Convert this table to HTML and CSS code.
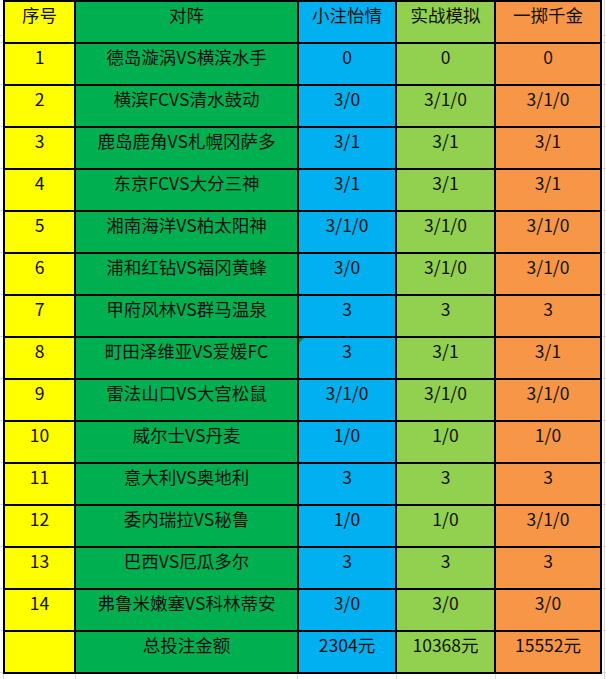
FILE: index.html
```html
<!DOCTYPE html>
<html lang="zh-CN">
<head>
<meta charset="utf-8">
<title>投注表</title>
<link rel="stylesheet" href="styles.css">
</head>
<body>
<div class="sheet">
  <div class="cell c1">序号</div><div class="cell c2">对阵</div><div class="cell c3">小注怡情</div><div class="cell c4">实战模拟</div><div class="cell c5">一掷千金</div>
  <div class="cell c1 num">1</div><div class="cell c2">德岛漩涡VS横滨水手</div><div class="cell c3 num">0</div><div class="cell c4 num">0</div><div class="cell c5 num">0</div>
  <div class="cell c1 num">2</div><div class="cell c2">横滨FCVS清水鼓动</div><div class="cell c3 num">3/0</div><div class="cell c4 num">3/1/0</div><div class="cell c5 num">3/1/0</div>
  <div class="cell c1 num">3</div><div class="cell c2">鹿岛鹿角VS札幌冈萨多</div><div class="cell c3 num">3/1</div><div class="cell c4 num">3/1</div><div class="cell c5 num">3/1</div>
  <div class="cell c1 num">4</div><div class="cell c2">东京FCVS大分三神</div><div class="cell c3 num">3/1</div><div class="cell c4 num">3/1</div><div class="cell c5 num">3/1</div>
  <div class="cell c1 num">5</div><div class="cell c2">湘南海洋VS柏太阳神</div><div class="cell c3 num">3/1/0</div><div class="cell c4 num">3/1/0</div><div class="cell c5 num">3/1/0</div>
  <div class="cell c1 num">6</div><div class="cell c2">浦和红钻VS福冈黄蜂</div><div class="cell c3 num">3/0</div><div class="cell c4 num">3/1/0</div><div class="cell c5 num">3/1/0</div>
  <div class="cell c1 num">7</div><div class="cell c2">甲府风林VS群马温泉</div><div class="cell c3 num">3</div><div class="cell c4 num">3</div><div class="cell c5 num">3</div>
  <div class="cell c1 num">8</div><div class="cell c2">町田泽维亚VS爱媛FC</div><div class="cell c3 num flag">3</div><div class="cell c4 num">3/1</div><div class="cell c5 num">3/1</div>
  <div class="cell c1 num">9</div><div class="cell c2">雷法山口VS大宫松鼠</div><div class="cell c3 num">3/1/0</div><div class="cell c4 num">3/1/0</div><div class="cell c5 num">3/1/0</div>
  <div class="cell c1 num">10</div><div class="cell c2">威尔士VS丹麦</div><div class="cell c3 num">1/0</div><div class="cell c4 num">1/0</div><div class="cell c5 num">1/0</div>
  <div class="cell c1 num">11</div><div class="cell c2">意大利VS奥地利</div><div class="cell c3 num">3</div><div class="cell c4 num">3</div><div class="cell c5 num">3</div>
  <div class="cell c1 num">12</div><div class="cell c2">委内瑞拉VS秘鲁</div><div class="cell c3 num">1/0</div><div class="cell c4 num">1/0</div><div class="cell c5 num">3/1/0</div>
  <div class="cell c1 num">13</div><div class="cell c2">巴西VS厄瓜多尔</div><div class="cell c3 num">3</div><div class="cell c4 num">3</div><div class="cell c5 num">3</div>
  <div class="cell c1 num">14</div><div class="cell c2">弗鲁米嫩塞VS科林蒂安</div><div class="cell c3 num">3/0</div><div class="cell c4 num">3/0</div><div class="cell c5 num">3/0</div>
  <div class="cell c1"></div><div class="cell c2">总投注金额</div><div class="cell c3 num">2304元</div><div class="cell c4 num">10368元</div><div class="cell c5 num">15552元</div>
</div>
</body>
</html>
```
FILE: styles.css
```css
html, body {
  margin: 0;
  padding: 0;
}
body {
  width: 606px;
  height: 679px;
  overflow: hidden;
  background-color: #fff;
  background-image:
    linear-gradient(90deg, transparent 604px, #d9d9d9 604px, #d9d9d9 605px, transparent 605px),
    linear-gradient(90deg, transparent 3px, #d9d9d9 3px, #d9d9d9 4px, transparent 4px,
      transparent 75px, #d9d9d9 75px, #d9d9d9 76px, transparent 76px,
      transparent 297px, #d9d9d9 297px, #d9d9d9 298px, transparent 298px,
      transparent 396px, #d9d9d9 396px, #d9d9d9 397px, transparent 397px,
      transparent 495px, #d9d9d9 495px, #d9d9d9 496px, transparent 496px),
    repeating-linear-gradient(180deg, #d9d9d9 0, #d9d9d9 1px, transparent 1px, transparent 42px);
  background-position: 0 0, 0 0, 0 42px;
  font-family: "Noto Sans CJK SC", "Noto Sans", sans-serif;
  color: #111;
}
.sheet {
  margin-left: 3px;
  width: 599px;
  box-sizing: border-box;
  display: grid;
  grid-template-columns: 69px 221px 96px 97px 104px;
  grid-auto-rows: 40px;
  gap: 2px;
  padding: 2px;
  background: #000;
}
.cell {
  position: relative;
  display: flex;
  justify-content: center;
  align-items: flex-start;
  font-size: 17.5px;
  line-height: 22px;
  padding-top: 2px;
  white-space: nowrap;
}
.num {
  padding-top: 2px;
}
.c1 { background: #ffff00; }
.c2 { background: #00b050; }
.c3 { background: #00b0f0; }
.c4 { background: #92d050; }
.c5 { background: #f79646; }
.flag::before {
  content: "";
  position: absolute;
  left: 0;
  top: 0;
  border-top: 5px solid #1f7a2e;
  border-right: 5px solid transparent;
}
```
